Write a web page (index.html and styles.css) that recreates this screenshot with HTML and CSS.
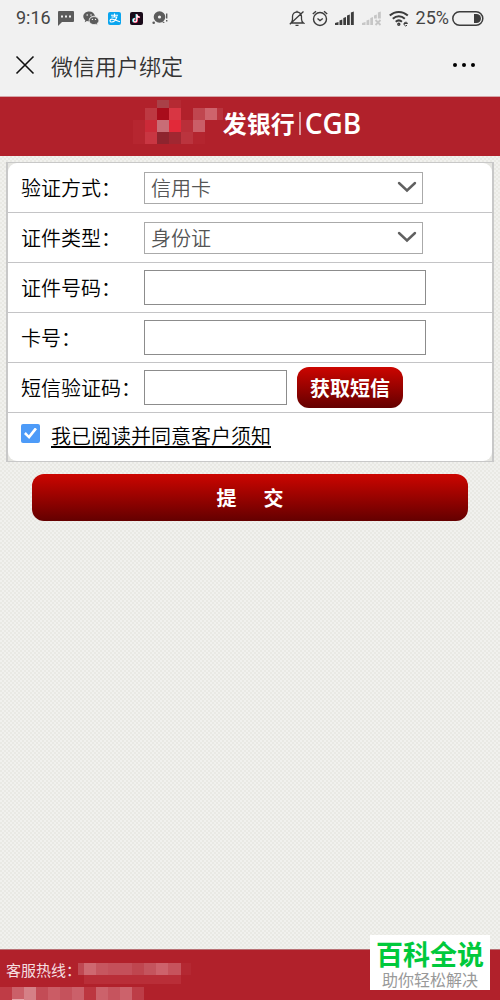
FILE: index.html
```
<!DOCTYPE html>
<html lang="zh-CN">
<head>
<meta charset="utf-8">
<meta name="viewport" content="width=device-width, initial-scale=1">
<title>微信用户绑定</title>
<link rel="stylesheet" href="styles.css">
</head>
<body>
<div class="page">
  <div class="status">
    <div class="status-left">
      <span class="clock">9:16</span>
      <svg width="16" height="16" viewBox="0 0 16 16"><path d="M1 1h14q1 0 1 1v9q0 1-1 1H4l-4 4V2q0-1 1-1z" fill="#5c5c5c"/><path d="M3 5.500h2v2H3zM7 5.500h2v2H7zM11 5.500h2v2h-2z" fill="#f1f1f1"/></svg>
      <svg width="16" height="16" viewBox="0 0 16 16"><path d="M6.200 1.500C2.800 1.500.3 3.700.3 6.500c0 1.500.8 2.900 2 3.800l-.6 1.900 2.200-1.100c.8.200 1.500.3 2.300.3A4.600 4.600 0 0 1 11.900 6C11.500 3.300 9.200 1.500 6.200 1.500z" fill="#5c5c5c"/><path d="M11 6.600c-2.800 0-4.900 1.800-4.900 4s2.100 4 4.900 4c.6 0 1.200-.1 1.700-.3l1.800.9-.5-1.600c1.100-.7 1.800-1.800 1.800-3 0-2.200-2.100-4-4.800-4z" fill="#5c5c5c" stroke="#f1f1f1" stroke-width=".7"/><g fill="#f1f1f1"><circle cx="4.200" cy="5" r=".8"/><circle cx="8" cy="5" r=".8"/><circle cx="9.400" cy="9.400" r=".7"/><circle cx="12.500" cy="9.400" r=".7"/></g></svg>
      <svg width="13" height="13" viewBox="0 0 13 13"><rect width="13" height="13" rx="2" fill="#0aa5ef"/><path d="M3 3.200h7M6.500 1.500V5M3.500 5h5.300C8 7.500 5.800 10 3.700 10c-2.400 0-2.200-3 .3-2.900C6.500 7.200 9 9 12 9.800" fill="none" stroke="#fff" stroke-width="1.100"/></svg>
      <svg width="13" height="13" viewBox="0 0 13 13"><rect width="13" height="13" rx="2" fill="#1a0b1a"/><g fill="none" stroke-width="1.600"><path d="M6.300 2v6.200a1.700 1.700 0 1 1-1.700-1.700M6.300 2.500c.2 1.500 1.300 2.400 2.900 2.400" stroke="#3ee"/><path d="M7.200 2.600v6a1.700 1.700 0 1 1-1.700-1.700M7.200 3c.2 1.500 1.300 2.400 2.900 2.400" stroke="#f25"/><path d="M6.800 2.300v6a1.700 1.700 0 1 1-1.700-1.700M6.800 2.700c.2 1.500 1.300 2.400 2.900 2.400" stroke="#fff" stroke-width="1.200"/></g></svg>
      <svg width="16" height="16" viewBox="0 0 16 16"><circle cx="7.500" cy="7" r="5.800" fill="#5c5c5c"/><circle cx="7.500" cy="7" r="1.600" fill="#f1f1f1"/><circle cx="1.700" cy="12.800" r="1.300" fill="#5c5c5c"/><path d="M10 11l3 1.500-2 .5zM14 3.500h1.400v5H14zM14 10h1.400v1.500H14z" fill="#5c5c5c"/></svg>
    </div>
    <div class="status-right">
      <svg width="16" height="17" viewBox="0 0 16 17" fill="none" stroke="#3c3c3c" stroke-width="1.300"><path d="M2 13h12.500c-1.500-1-2-2-2-4V6.500a4.500 4.500 0 0 0-9 0V9c0 2-.5 3-1.500 4zM8 2V.7M6.500 15.300h3M.8 14.200L14.500 1.500"/></svg>
      <svg width="16" height="17" viewBox="0 0 16 17" fill="none" stroke="#3c3c3c" stroke-width="1.400"><circle cx="8" cy="9" r="6.500"/><path d="M.8 4L4 1.200M15.200 4L12 1.200M5.500 8.500L8 10.500l2.800-2"/></svg>
      <svg width="20" height="16" viewBox="0 0 20 16" fill="#3c3c3c"><path d="M0 15v-2l3.500-1v3zM4.500 15v-4.500l2.800-1V15zM8.300 15V8l2.700-1v8zM12 15V5.500l2.800-1V15zM15.900 15V2.500l2.900-1V15z"/></svg>
      <svg width="20" height="16" viewBox="0 0 20 16" fill="#c6c6c6"><path d="M0 15v-2l3.500-1v3zM4.500 15v-4.500l2.800-1V15zM8.300 15V8l2.700-1v8zM12 8.500v-3l2.800-1v4zM15.900 8.500v-6l2.900-1v7z"/><path d="M13.500 10l5 5M18.500 10l-5 5" stroke="#c6c6c6" stroke-width="1.800"/></svg>
      <svg width="20" height="17" viewBox="0 0 20 17" fill="none" stroke="#3c3c3c" stroke-width="2"><path d="M.8 5.500c5.200-4.800 12.700-4.800 18 0M3.800 8.700c3.600-3.200 8.500-3.200 12 0M6.700 11.700c2-1.700 4.300-1.700 6.200 0"/><circle cx="9.800" cy="14.200" r=".7"/><path d="M15 13.500h3.500a1.800 1.800 0 1 0-.5 1.800" stroke-width="1"/></svg>
      <span class="percent">25%</span>
      <svg width="32" height="15" viewBox="0 0 32 15"><rect x=".8" y=".8" width="30" height="13.400" rx="6.700" fill="none" stroke="#3c3c3c" stroke-width="1.500"/><path d="M22 3h2.500a4.500 4.500 0 0 1 0 9H22z" fill="#3c3c3c"/></svg>
    </div>
  </div>
  <header class="nav">
    <button class="icon-btn" type="button" aria-label="关闭"><svg width="20" height="20" viewBox="0 0 20 20"><path d="M1.500 1.500l17 17M18.500 1.500l-17 17" stroke="#111" stroke-width="1.600"/></svg></button>
    <h1 class="title">微信用户绑定</h1>
    <button class="icon-btn" type="button" aria-label="更多"><svg width="24" height="6" viewBox="0 0 24 6"><circle cx="3" cy="3" r="2"/><circle cx="12" cy="3" r="2"/><circle cx="21" cy="3" r="2"/></svg></button>
  </header>
  <div class="brand">
    <svg width="90" height="44" viewBox="0 0 90 44" shape-rendering="crispEdges">
      <path d="M24 0h12v8H24z" fill="#a94148"/><path d="M36 0h12v8H36z" fill="#b52a33"/>
      <path d="M12 8h12v12H12z" fill="#bd3942"/><path d="M24 8h12v12H24z" fill="#a90c1b"/><path d="M36 8h12v12H36z" fill="#d83643"/><path d="M60 8h12v12H60z" fill="#c0464f"/><path d="M72 8h12v12H72z" fill="#ce636c"/><path d="M84 8h6v12h-6z" fill="#b9343e"/>
      <path d="M0 20h12v24H0z" fill="#b62630"/><path d="M12 20h12v12H12z" fill="#cb2a38"/><path d="M24 20h12v12H24z" fill="#c86d76"/><path d="M36 20h12v12H36z" fill="#e22939"/><path d="M48 20h12v12H48z" fill="#b92f39"/><path d="M60 20h12v12H60z" fill="#ca5e67"/>
      <path d="M12 32h12v12H12z" fill="#c93642"/><path d="M24 32h12v12H24z" fill="#8e242e"/><path d="M36 32h12v12H36z" fill="#a12731"/><path d="M48 32h12v12H48z" fill="#bb343e"/><path d="M60 32h12v12H60z" fill="#b4252f"/>
    </svg>
    <span class="brand-cn">发银行</span>
    <span class="brand-en">CGB</span>
  </div>
  <main class="main">
    <form class="form">
      <div class="card">
        <div class="rows">
          <div class="row">
            <label for="method">验证方式：</label>
            <div class="select"><select id="method"><option>信用卡</option></select><svg class="chevron" width="20" height="12" viewBox="0 0 20 12"><path d="M2 2l8 7.500L18 2" fill="none" stroke="#606060" stroke-width="2.400" stroke-linecap="round"/></svg></div>
          </div>
          <div class="row">
            <label for="idtype">证件类型：</label>
            <div class="select"><select id="idtype"><option>身份证</option></select><svg class="chevron" width="20" height="12" viewBox="0 0 20 12"><path d="M2 2l8 7.500L18 2" fill="none" stroke="#606060" stroke-width="2.400" stroke-linecap="round"/></svg></div>
          </div>
          <div class="row"><label for="idno">证件号码：</label><input class="text" id="idno" type="text"></div>
          <div class="row"><label for="cardno">卡号：</label><input class="text" id="cardno" type="text"></div>
          <div class="row">
            <label for="sms">短信验证码：</label>
            <div class="sms"><input class="text text-short" id="sms" type="text"><button class="red-btn sms-btn" type="button">获取短信</button></div>
          </div>
          <div class="agree"><input class="check" id="agree" type="checkbox" checked aria-label="我已阅读并同意客户须知"><a href="#">我已阅读并同意客户须知</a></div>
        </div>
      </div>
      <button class="red-btn submit" type="submit">提&nbsp;&nbsp;&nbsp;&nbsp;&nbsp;&nbsp;交</button>
    </form>
  </main>
  <footer class="footer">
    <div class="hotline"><span>客服热线：</span>
      <svg width="114" height="22" viewBox="0 0 114 22" shape-rendering="crispEdges"><path d="M0 1h6v12H0z" fill="#bf4852"/><path d="M6 1h12v12H6z" fill="#ce6870"/><path d="M18 1h12v12H18z" fill="#c6565f"/><path d="M30 1h36v12H30z" fill="#c4505a"/><path d="M54 1h12v12H54z" fill="#bf464f"/><path d="M66 1h12v12H66z" fill="#c4545d"/><path d="M78 1h12v12H78z" fill="#cd626b"/><path d="M90 1h13v12H90z" fill="#c6535c"/><path d="M103 1h10v12h-10z" fill="#b42832"/><path d="M6 13h97v9H6z" fill="#b92e38"/></svg>
    </div>
    <svg width="145" height="13" viewBox="0 0 145 13" shape-rendering="crispEdges"><path d="M0 0h12v13H0z" fill="#bf3c46"/><path d="M12 0h12v13H12z" fill="#cb6069"/><path d="M24 0h12v13H24z" fill="#d58087"/><path d="M36 0h12v13H36z" fill="#c34c56"/><path d="M48 0h12v13H48z" fill="#cb5c65"/><path d="M60 0h12v13H60z" fill="#c5525c"/><path d="M72 0h12v13H72z" fill="#cb606a"/><path d="M84 0h12v13H84z" fill="#bc3640"/><path d="M96 0h12v13H96z" fill="#cc626b"/><path d="M108 0h12v13h-12z" fill="#c6545e"/><path d="M120 0h12v13h-12z" fill="#cc626b"/><path d="M132 0h12v13h-12z" fill="#bd3d47"/><path d="M12 12h12v1H12z" fill="#e6a6ab"/></svg>
  </footer>
  <aside class="stamp"><strong>百科全说</strong><span>助你轻松解决</span></aside>
</div>
</body>
</html>
```
FILE: styles.css
```
* { box-sizing: border-box; }
body {
  margin: 0;
  font-family: "Noto Sans CJK SC", sans-serif;
  font-size: 20px;
  font-weight: 350;
  line-height: 30px;
  color: #000;
}
button, input, select { font: inherit; }
svg { display: block; flex: none; }

.page {
  position: relative;
  display: flex;
  flex-direction: column;
  min-height: 100vh;
  background: repeating-conic-gradient(#e9e9e4 0 25%, #f1f1ee 0 50%) 0 0 / 4px 4px;
}

.status {
  display: flex;
  justify-content: space-between;
  align-items: center;
  height: 36px;
  padding: 0 16px;
  background: #f1f1f1;
  color: #444;
  font-family: Roboto, sans-serif;
  font-size: 18px;
  font-weight: 400;
}
.status-left { display: flex; align-items: center; gap: 9px; }
.clock { margin-right: -2px; }
.status-right { display: flex; align-items: center; gap: 7px; }
.percent { margin-right: -4px; }

.nav {
  display: flex;
  align-items: center;
  height: 61px;
  padding: 0 24px 2px 15px;
  border-bottom: 1px solid #d5a5a8;
  background: #f1f1f1;
}
.icon-btn { padding: 0; border: 0; background: none; }
.title {
  flex: 1;
  margin: 0 0 0 16px;
  font-size: 22px;
  font-weight: 350;
  line-height: 32px;
  color: #333;
}

.brand {
  display: flex;
  justify-content: center;
  height: 59px;
  padding: 3px 6px 0 0;
  background: #b1212b;
  color: #fff;
}
.brand-cn {
  height: 34px;
  margin-top: 6px;
  padding-right: 4px;
  font-size: 24px;
  font-weight: 700;
  line-height: 34px;
}
.brand-en {
  height: 23px;
  margin-top: 12px;
  padding-left: 4px;
  border-left: 2px solid #dc9a9e;
  font-family: "Open Sans", sans-serif;
  font-size: 28px;
  font-weight: 600;
  line-height: 23px;
}

.main { flex: 1; padding: 6px 6px 0; }
.card { border: 1px solid #c8c8c8; border-width: 1px 2px; background: #e6e6e2; }
.rows { border-radius: 9px; background: #fff; }
.row {
  display: grid;
  grid-template-columns: 123px 1fr;
  align-items: center;
  height: 50px;
  padding: 0 12px 0 13px;
  border-bottom: 1px solid #c4c4c6;
}
.row label { white-space: nowrap; }

.select { position: relative; width: 83%; }
.select select {
  display: block;
  width: 100%;
  height: 32px;
  padding: 0 6px;
  border: 1px solid #aaa;
  border-radius: 0;
  background: #fff;
  color: #555;
  line-height: 30px;
  appearance: none;
}
.chevron { position: absolute; top: 9px; right: 6px; pointer-events: none; }
.text {
  width: 84%;
  height: 35px;
  padding: 0 6px;
  border: 1px solid #8c8c8c;
  border-radius: 0;
}
.sms { display: flex; align-items: center; gap: 10px; }
.text-short { width: 143px; }
.red-btn {
  border: 0;
  border-radius: 12px;
  background: linear-gradient(#cc0500, #640000);
  color: #fff;
  font-weight: 700;
}
.sms-btn { height: 41px; padding: 0 13px; }
.agree {
  display: flex;
  gap: 11px;
  height: 48px;
  padding: 8px 13px 0;
}
.agree a { color: #000; text-underline-offset: 2px; }
.check {
  display: grid;
  place-items: center;
  width: 19px;
  height: 19px;
  margin: 3px 0 0;
  border-radius: 2px;
  background: #4d9bf8;
  appearance: none;
}
.check:checked::before {
  content: "";
  width: 13px;
  height: 12px;
  background: #fff;
  clip-path: polygon(0 55%, 14% 38%, 37% 64%, 84% 0, 100% 14%, 40% 96%);
}
.submit {
  display: block;
  width: calc(100% - 52px);
  height: 47px;
  margin: 12px auto 0;
}

.footer {
  height: 51px;
  border-top: 1px solid #b87074;
  background: #b1212b;
  color: #f5dfe0;
  font-size: 15px;
  font-weight: 400;
}
.hotline { display: flex; height: 37px; padding: 5px 6px 0; }
.hotline svg { margin: 7px 0 0 -3px; }

.stamp {
  position: absolute;
  right: 10px;
  bottom: 10px;
  width: 120px;
  height: 55px;
  padding-top: 4px;
  background: #fff;
  font-weight: 400;
  text-align: center;
}
.stamp strong {
  display: block;
  color: #00c93c;
  font-size: 27px;
  font-weight: 700;
  line-height: 30px;
}
.stamp span {
  display: block;
  color: #999;
  font-size: 16px;
  line-height: 20px;
}
```
